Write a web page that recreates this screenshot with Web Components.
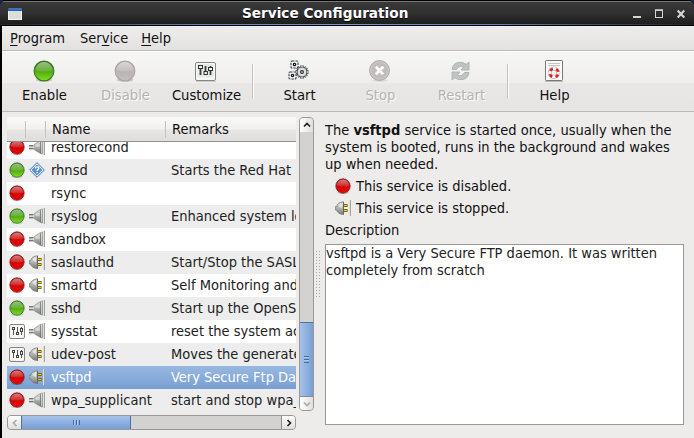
<!DOCTYPE html>
<html lang="en"><head><meta charset="utf-8"><title>Service Configuration</title>
<style>
html,body{margin:0;height:100%;overflow:hidden;background:#16265a}
body{font-family:"DejaVu Sans Condensed","DejaVu Sans",sans-serif;font-stretch:condensed;font-size:14.5px;line-height:17px;color:#111}
</style></head><body>
<service-window></service-window>
<script>
const define=(name,html,setup)=>customElements.define(name,class extends HTMLElement{
  constructor(){super();this.attachShadow({mode:'open'});}
  connectedCallback(){this.shadowRoot.innerHTML=typeof html==='function'?html(this):html;if(setup)setup(this);}
});
const ball=(id,a,b,c,s)=>`<defs><linearGradient id="${id}" x2="0" y2="1"><stop stop-color="${a}"/><stop offset=".5" stop-color="${b}"/><stop offset="1" stop-color="${c}"/></linearGradient><linearGradient id="${id}h" x2="0" y2="1"><stop stop-color="#fff" stop-opacity=".5"/><stop offset="1" stop-color="#fff" stop-opacity=".12"/></linearGradient></defs><ellipse cx="8" cy="14.6" rx="6" ry="1.3" fill="#000" opacity=".18"/><circle cx="8" cy="8" r="7.2" fill="url(#${id})" stroke="${s}" stroke-width=".8"/><path d="M1.8 7.5a6.2 6 0 0 1 12.4 0q-6.200 1.800-12.400 0z" fill="url(#${id}h)"/>`;
const sliders=`<rect x=".5" y="1.500" width="15" height="14" rx="1.500" fill="#f6f6f4" stroke="#858783"/><path d="M4.500 4v8M8.500 4v8M12.500 4v8" stroke="#555753" stroke-width="1"/><g fill="#eee" stroke="#444" stroke-width="1"><rect x="3.500" y="4.500" width="2" height="2"/><rect x="7.500" y="9.500" width="2" height="2"/><rect x="11.500" y="5.500" width="2" height="3"/></g>`;
const wall=`<path d="M15.500 0v16" stroke="#a2a49f"/><path d="M14.500 0v16" stroke="#dededb"/>`;
const metal=`<defs><linearGradient id="m" x2="0" y2="1"><stop stop-color="#e3e4e1"/><stop offset=".55" stop-color="#aaada8"/><stop offset="1" stop-color="#777a75"/></linearGradient></defs>`;
const gear=(x,y,r,n,w)=>{let t='';for(let i=0;i<n;i++)t+=`<path d="M${x} ${y-r}v-${w}" transform="rotate(${i*360/n} ${x} ${y})"/>`;
 return `<g stroke="#3d4548" stroke-width="3.300">${t}</g><circle cx="${x}" cy="${y}" r="${r}" fill="#dce0df" stroke="#3d4548" stroke-width="1.100"/><g stroke="#dce0df" stroke-width="1.500">${t}</g><circle cx="${x}" cy="${y}" r="1.400" fill="#f4f4f4" stroke="#222" stroke-width="1.100"/>`;};
const smallGear=(x,y)=>`<rect x="${x-3.5}" y="${y-3.5}" width="7" height="7" rx="1" fill="#f4f6f5" stroke="#394144" stroke-width="1.100" stroke-dasharray="2.500 1"/><circle cx="${x}" cy="${y}" r="1.200" fill="#fff" stroke="#111" stroke-width="1.200"/>`;
const ICONS={
 green:[16,ball('g','#347c12','#52a812','#7be01b','#3d7424')],
 red:[16,ball('r','#a80000','#cf0606','#ee0505','#842020')],
 off:[16,ball('o','#b5b0b0','#bab3b3','#c4bebe','#aaa5a5')],
 sliders:[16,sliders],
 bigsliders:[22,`<path d="M1 21.500h20" stroke="#ccc"/><rect x=".5" y="2.500" width="20" height="18" rx="1.500" fill="#f8f8f7" stroke="#858783"/><rect x="2.500" y="4" width="16" height="13.500" fill="#e8e9e7"/><path d="M5.500 6v9M10.500 6v9M15.500 6v9" stroke="#3d403d" stroke-width="1.800"/><g fill="#eee" stroke="#303430"><rect x="3.500" y="5.500" width="4" height="3"/><rect x="9" y="11.500" width="3.400" height="3"/><rect x="13.500" y="7.500" width="4" height="3"/></g>`],
 joined:[16,metal+wall+`<path d="M0 6.800h4L8 3.500q2-1 3.500-2l2-.5v14l-2-.5q-1.500-1-3.500-2L4 9.800H0z" fill="url(#m)" stroke="#8b8e88" stroke-width=".7"/><path d="M0 6.700h4M0 9.700h4" stroke="#666964"/><path d="M0 8.200h5" stroke="#f0f0ee"/><ellipse cx="8.500" cy="6.500" rx="2.500" ry="1.600" fill="#fff" opacity=".4"/><path d="M11.600 2v12" stroke="#6f726d" stroke-width=".8"/><path d="M12.600 2v12" stroke="#d9dad6" stroke-width=".8"/>`],
 unplugged:[16,metal+wall+`<path d="M8 5.500h4.500M8 10.500h4.500" stroke="#5c4900" stroke-width="3"/><path d="M8.500 5.500H12M8.500 10.500H12" stroke="#f0cf10" stroke-width="1.400"/><path d="M0 6.800h1.500Q2.500 2.300 8.500 1.800v12.800Q2.500 14 1.500 9.800H0z" fill="url(#m)" stroke="#747771" stroke-width=".8"/><path d="M3.500 6Q4.500 4.300 7 3.500v5z" fill="#fff" opacity=".55"/><path d="M8.500 2v12.500" stroke="#5d605b" stroke-width=".8"/>`],
 unknown:[16,`<path d="M8 .7L15.300 8 8 15.300.7 8z" fill="#fff" stroke="#3a70b5"/><path d="M8 2.800L13.200 8 8 13.200 2.800 8z" fill="#5c91ce" stroke="#457cbd" stroke-width=".7"/><path d="M6.300 6.600q0-1.700 1.800-1.700t1.700 1.400q0 1-1.600 1.700v1M8.200 10v1.300" fill="none" stroke="#fff" stroke-width="1.300"/>`],
 start:[22,gear(14,12,5,8,1.600)+smallGear(6.5,4.5)+smallGear(4.5,15.5)],
 stop:[22,`<ellipse cx="11" cy="20.500" rx="8" ry="1.500" fill="#ddd"/><circle cx="10.500" cy="10.500" r="9.900" fill="#c3bcbc" stroke="#aaa4a4"/><circle cx="10.500" cy="10.500" r="8.800" fill="none" stroke="#d0caca"/><path d="M6.800 6.800l7.400 7.400m0-7.400l-7.400 7.400" stroke="#fff" stroke-width="2.700"/>`],
 restart:[22,`<g fill="#c1c3c3" stroke="#aeb1b1" stroke-width=".9"><path d="M2 9.500Q3 2.500 10 2.300q4 0 6.200 2L19 2v8h-8l2.700-2.800Q9 4.800 6.500 9.500z"/><path d="M2 9.500Q3 2.500 10 2.300q4 0 6.200 2L19 2v8h-8l2.700-2.800Q9 4.800 6.500 9.500z" transform="rotate(180 10.500 11)"/></g>`],
 help:[22,`<path d="M2 21.500h18" stroke="#bbb"/><rect x="2.500" y=".5" width="17" height="20" rx=".7" fill="#fafaf9" stroke="#777975"/><path d="M5 3.500h12M5 5.500h12" stroke="#c3c5c2"/><circle cx="11" cy="12.800" r="4.200" fill="none" stroke="#b5a3a3" stroke-width="4"/><circle cx="11" cy="12.800" r="4.200" fill="none" stroke="#fff" stroke-width="3"/><circle cx="11" cy="12.800" r="4.300" fill="none" stroke="#da2222" stroke-width="2.600" stroke-dasharray="3.377" stroke-dashoffset="-1.700"/>`],
 window:[14,`<rect x=".5" y=".5" width="13" height="11" fill="#deded9" stroke="#f2f2ef"/><path d="M0 0h14v3H0z" fill="#285fae"/><path d="M1 1h12" stroke="#5388c9"/>`,12],
 up:[8,'<path d="M1 5.500l3-3 3 3" fill="none" stroke="#222" stroke-width="1.700"/>'],
 down:[8,'<path d="M1 2.500l3 3 3-3" fill="none" stroke="#aaa" stroke-width="1.700"/>'],
 left:[8,'<path d="M5.500 1l-3 3 3 3" fill="none" stroke="#aaa" stroke-width="1.700"/>'],
 right:[8,'<path d="M2.500 1l3 3-3 3" fill="none" stroke="#222" stroke-width="1.700"/>']
};
define('ui-icon',e=>{const [w,s,h=w]=ICONS[e.getAttribute('name')];const size=+(e.getAttribute('size')||w);
 return `<style>:host{display:block;flex:none;line-height:0}svg{display:block}</style><svg width="${size}" height="${size*h/w}" viewBox="0 0 ${w} ${h}">${s}</svg>`;});

define('title-bar',`<style>
:host{display:grid;grid-template-columns:234px auto 1fr;align-items:center;box-sizing:border-box;height:26px;border-top:1px solid #000;border-bottom:1px solid #000;padding:0 9px 0 8px;border-radius:5px 5px 0 0;
background:linear-gradient(#777,#777) 0 0/100% 1px no-repeat,linear-gradient(90deg,#222,#5983b7 28%,#6b98cf 50%,#5983b7 72%,#222) 0 100%/100% 1px no-repeat,linear-gradient(#3a3a3a,#303030 50%,#1c1c1c);color:#fff;font:bold 13.65px/24px "DejaVu Sans",sans-serif}
ui-icon{padding-top:2px}b{font-weight:bold;font-stretch:normal;text-shadow:0 1px #000}.c{display:flex;justify-content:flex-end;padding-top:2px}svg{display:block}
</style><ui-icon name="window"></ui-icon><b><slot></slot></b><div class="c"><svg width="52" height="10" viewBox="0 0 52 10"><g fill="none" stroke="#d5d5d5"><path d="M0 8h8" stroke-width="2"/><path d="M22 1h8M22.500 1v8M29.500 1v8M22 8.500h8" /><path d="M22 1.200h8" stroke-width="1.500"/><path d="M44.700 1.500l6.600 7m0-7l-6.600 7" stroke-width="2.200"/></g></svg></div>`);

define('menu-bar',`<style>:host{display:flex;gap:15px;box-sizing:border-box;height:25px;padding:4px 8px 0;border-bottom:1px solid #bcbbb9;background:linear-gradient(#eeedeb,#e3e2e0)}
span{white-space:nowrap}span:last-child{margin-left:-2px}u{text-decoration-thickness:1px;text-underline-offset:2px;text-decoration-skip-ink:none}</style><span><u>P</u>rogram</span><span>Ser<u>v</u>ice</span><span><u>H</u>elp</span>`);

define('tool-button',e=>`<style>:host{display:flex;flex-direction:column;align-items:center;width:81px;flex:none;padding-top:8px}
ui-icon{height:22px;margin:0 1px 4px 0}span{white-space:nowrap;font-size:14.67px;${e.hasAttribute('disabled')?'color:#b4b3b1;text-shadow:1px 1px #fff':''}}</style><ui-icon name="${e.getAttribute('icon')}" size="22"></ui-icon><span><slot></slot></span>`);
define('tool-bar',`<style>:host{display:flex;box-sizing:border-box;height:61px;border-top:1px solid #fff;border-bottom:1px solid #bbbab8;padding-left:2px;background:linear-gradient(#f6f6f5,#efeeec 52%,#e8e7e5 53%,#e6e5e3)}
i{width:1px;height:35px;margin:12px 5px 0 5px;background:#c3c2c0;border-right:1px solid #fbfbfa}</style>
<tool-button icon="green">Enable</tool-button><tool-button icon="off" disabled>Disable</tool-button><tool-button icon="bigsliders">Customize</tool-button><i></i>
<tool-button icon="start">Start</tool-button><tool-button icon="stop" disabled>Stop</tool-button><tool-button icon="restart" disabled>Restart</tool-button><i></i><tool-button icon="help">Help</tool-button>`);

define('list-header',`<style>:host{display:grid;grid-template-columns:19px 20px 120px 1fr;box-sizing:border-box;height:25px;flex:none;border-bottom:1px solid #92918f;background:linear-gradient(#fafaf9,#f1f0ef 50%,#e6e5e3 55%,#dfdedc)}
span{box-sizing:border-box;height:17px;margin-top:4px;padding-left:6px;border-right:1px solid #c3c2c0;white-space:nowrap}span:last-child{border:0}</style><span></span><span></span><span>Name</span><span>Remarks</span>`);
define('service-row',e=>{const a=n=>e.getAttribute(n)||'';return `<style>
:host{display:grid;grid-template-columns:20px 22px 120px 1fr;box-sizing:border-box;height:23px;flex:none;padding:3px 0 0 2px;background:#fff;color:#222;white-space:nowrap}
:host(:nth-child(even)){background:#ededed}:host([selected]){background:linear-gradient(#98b8e2,#789fd2);color:#fff}
</style><ui-icon name="${a('status')}"></ui-icon>${a('plug')?`<ui-icon name="${a('plug')}"></ui-icon>`:'<div></div>'}<span>${a('name')}</span><span>${a('remarks')}</span>`;});
const rows=[['red','joined','restorecond',''],['green','unknown','rhnsd','Starts the Red Hat Network'],['red','','rsync',''],['green','joined','rsyslog','Enhanced system logging'],['red','joined','sandbox',''],['red','unplugged','saslauthd','Start/Stop the SASL auth'],['red','unplugged','smartd','Self Monitoring and Reporting'],['green','joined','sshd','Start up the OpenSSH server'],['sliders','joined','sysstat','reset the system activity'],['sliders','unplugged','udev-post','Moves the generated rules'],['red','unplugged','vsftpd','Very Secure Ftp Daemon'],['red','joined','wpa_supplicant','start and stop wpa_supplicant']];
define('service-list',`<style>:host{display:flex;flex-direction:column;overflow:hidden;background:#fff}
.rows{flex:1;min-height:0;overflow:hidden;display:flex;flex-direction:column;justify-content:flex-end}</style><list-header></list-header><div class="rows">${rows.map(r=>`<service-row status="${r[0]}" plug="${r[1]}" name="${r[2]}" remarks="${r[3]}"${r[2]=='vsftpd'?' selected':''}></service-row>`).join('')}</div>`);

define('scroll-bar',e=>{const v=e.hasAttribute('vertical'),dir=v?'column':'row',ax=v?'90deg':'180deg',al=v?'height':'width';
return `<style>:host{display:flex;flex-direction:${dir};box-sizing:border-box;border:1px solid #999896;border-radius:4px;overflow:hidden;background:#d3d2d0}
.b,.t{flex:none;box-sizing:border-box;display:flex;align-items:center;justify-content:center}
.b{${al}:14px;background:linear-gradient(${ax},#fff,#dfdedc)}.b:first-child{border-${v?'bottom':'right'}:1px solid #8b8a88}.b:last-child{border-${v?'top':'left'}:1px solid #8b8a88}
.s{flex:1}.t{${al}:${v?75:110}px;margin:-1px;background:linear-gradient(${ax},#a5c2ea,#779fd3);border:1px solid #4a74a8;}
.g{width:${v?5:7}px;height:${v?7:5}px;background:repeating-linear-gradient(${v?'180deg':'90deg'},#456b9c 0 1px,#a9c6ec 1px 2px,transparent 2px 3px)}</style>
<div class="b"><ui-icon name="${v?'up':'left'}"></ui-icon></div>${v?'<div class="s"></div>':''}<div class="t"><div class="g"></div></div>${v?'':'<div class="s"></div>'}<div class="b"><ui-icon name="${v?'down':'right'}"></ui-icon></div>`;});

define('status-line',e=>`<style>:host{display:flex;align-items:center;height:22px;padding-left:10px;gap:5px;white-space:nowrap}span{padding-top:1px}</style><ui-icon name="${e.getAttribute('icon')}"></ui-icon><span><slot></slot></span>`);
define('detail-pane',`<style>:host{display:flex;flex-direction:column;min-width:0;box-sizing:border-box;padding-top:5px}
p{margin:0;white-space:nowrap}.first{height:53px}.d{height:17px;margin-top:3px}.box{box-sizing:border-box;height:181px;margin-top:5px;border:1px solid #999896;background:#fff;color:#222}b{font-weight:bold}
</style><p class="first">The <b>vsftpd</b> service is started once, usually when the<br>system is booted, runs in the background and wakes<br>up when needed.</p>
<status-line icon="red">This service is disabled.</status-line><status-line icon="unplugged">This service is stopped.</status-line><p class="d">Description</p><div class="box"><p>vsftpd is a Very Secure FTP daemon. It was written<br>completely from scratch</p></div>`);
define('pane-grip',`<style>:host{display:block;align-self:center;margin-left:-2px;width:6px;height:47px;background:radial-gradient(circle,#aaa9a7 .7px,transparent .8px) 0 0/3px 3px}</style>`);

define('service-window',`<style>:host{display:flex;flex-direction:column;width:694px;height:438px;overflow:hidden}
.body{flex:1;display:flex;flex-direction:column;border-left:2px solid #000;background:#edeceb}
main{display:grid;grid-template-columns:289px 15px 5px 359px;grid-template-rows:295px 15px;gap:3px;padding:5px 0 0 5px}
detail-pane{grid-column:4;grid-row:1/3}pane-grip{grid-column:3;grid-row:1/3}.h{grid-row:2;grid-column:1}.v{height:294px}</style>
<title-bar>Service Configuration</title-bar><div class="body"><menu-bar></menu-bar><tool-bar></tool-bar><main><service-list></service-list><scroll-bar class="v" vertical></scroll-bar><pane-grip></pane-grip><detail-pane></detail-pane><scroll-bar class="h"></scroll-bar></main></div>`);
</script></body></html>
